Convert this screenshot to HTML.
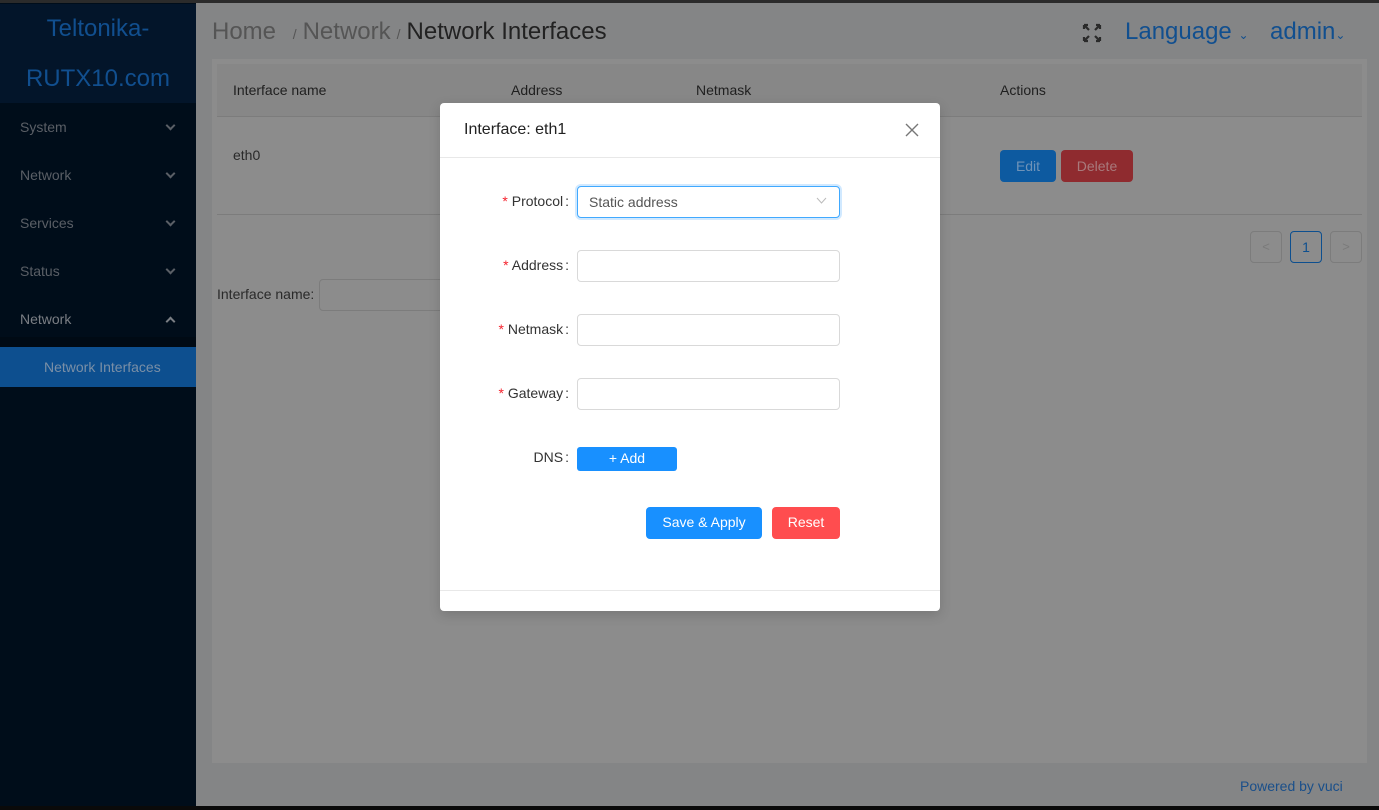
<!DOCTYPE html>
<html><head><meta charset="utf-8"><style>
*{box-sizing:border-box;margin:0;padding:0}
body{width:1379px;height:810px;overflow:hidden;background:#848586;font-family:"Liberation Sans",sans-serif;position:relative}
.a{position:absolute}
.side{left:0;top:3px;width:196px;height:803px;background:#000d1a}
.logo{left:0;top:4px;width:196px;height:99px;background:#03152a;color:#114f8f;font-size:24px;text-align:center;line-height:50px}
.mi{left:20px;color:#5a5f66;font-size:14px}
.chev{left:167px;width:7px;height:7px;border-right:2px solid #5a5f66;border-bottom:2px solid #5a5f66;transform:rotate(45deg)}
.lbl{font-size:14px;color:#222;}
.box{border:1px solid #d9d9d9;border-radius:4px;background:#fff;width:263px;height:32px}
.star{color:#f5222d}
.fl{font-size:14px;color:#333;text-align:right;width:130px}
.c{margin-left:2px}
</style></head><body>
<div class="a" style="left:0;top:0;width:1379px;height:3px;background:#2b2b2b"></div>
<div class="a" style="left:0;top:806px;width:1379px;height:4px;background:#0a0a0a"></div>
<div class="a side"></div>
<div class="a logo">Teltonika-<br>RUTX10.com</div>
<div class="a mi" style="top:119px">System</div><div class="a chev" style="top:122px"></div>
<div class="a mi" style="top:167px">Network</div><div class="a chev" style="top:170px"></div>
<div class="a mi" style="top:215px">Services</div><div class="a chev" style="top:218px"></div>
<div class="a mi" style="top:263px">Status</div><div class="a chev" style="top:266px"></div>
<div class="a mi" style="top:311px;color:#7a7e84">Network</div><div class="a chev" style="top:318px;transform:rotate(225deg);border-color:#7a7e84"></div>
<div class="a" style="left:0;top:337px;width:196px;height:50px;background:#000a14"></div>
<div class="a" style="left:0;top:347px;width:196px;height:40px;background:#0d4f8f;color:#7a8fa6;font-size:14px;line-height:40px;padding-left:44px">Network Interfaces</div>

<div class="a" style="left:212px;top:18px;font-size:24px;color:#555"><span>Home</span> <span style="font-size:14px;margin:0 6px 0 10px">/</span><span>Network</span><span style="font-size:14px;margin:0 6px">/</span><span style="color:#222">Network Interfaces</span></div>
<svg class="a" style="left:1081px;top:22px" width="22" height="22" viewBox="0 0 22 22" stroke="#2a2a2a" stroke-width="2.2" fill="none"><path d="M3 3l5 5M3 3h4M3 3v4M19 3l-5 5M19 3h-4M19 3v4M3 19l5-5M3 19h4M3 19v-4M19 19l-5-5M19 19h-4M19 19v-4"/></svg>
<div class="a" style="left:1125px;top:18px;font-size:24px;color:#114f8f">Language <span style="font-size:12px">⌄</span></div>
<div class="a" style="left:1270px;top:18px;font-size:24px;color:#114f8f">admin<span style="font-size:12px">⌄</span></div>

<div class="a" style="left:212px;top:59px;width:1155px;height:704px;background:#8c8c8c"></div>
<div class="a" style="left:217px;top:64px;width:1145px;height:53px;background:#878787;border-bottom:1px solid #7c7c7c"></div>
<div class="a lbl" style="left:233px;top:82px;color:#1f1f1f">Interface name</div>
<div class="a lbl" style="left:511px;top:82px;color:#1f1f1f">Address</div>
<div class="a lbl" style="left:696px;top:82px;color:#1f1f1f">Netmask</div>
<div class="a lbl" style="left:1000px;top:82px;color:#1f1f1f">Actions</div>
<div class="a lbl" style="left:233px;top:147px;color:#2a2a2a">eth0</div>
<div class="a" style="left:217px;top:214px;width:1145px;height:1px;background:#7c7c7c"></div>
<div class="a" style="left:1000px;top:150px;width:56px;height:32px;background:#0d5aa0;border-radius:4px;color:#6f93b8;font-size:14px;text-align:center;line-height:32px">Edit</div>
<div class="a" style="left:1061px;top:150px;width:72px;height:32px;background:#8f2b2f;border-radius:4px;color:#a87a7c;font-size:14px;text-align:center;line-height:32px">Delete</div>
<div class="a" style="left:1250px;top:231px;width:32px;height:32px;border:1px solid #7c7c7c;border-radius:4px;color:#7a7a7a;text-align:center;line-height:30px;font-size:13px">&lt;</div>
<div class="a" style="left:1290px;top:231px;width:32px;height:32px;border:1px solid #0d4f8f;border-radius:4px;color:#0d4f8f;text-align:center;line-height:30px;font-size:14px">1</div>
<div class="a" style="left:1330px;top:231px;width:32px;height:32px;border:1px solid #7c7c7c;border-radius:4px;color:#7a7a7a;text-align:center;line-height:30px;font-size:13px">&gt;</div>
<div class="a lbl" style="left:217px;top:286px;color:#2a2a2a">Interface name:</div>
<div class="a" style="left:319px;top:279px;width:130px;height:32px;border:1px solid #7c7c7c;border-radius:4px"></div>
<div class="a" style="left:1240px;top:778px;font-size:14px;color:#1a4f8a">Powered by vuci</div>

<div class="a" style="left:440px;top:103px;width:500px;height:508px;background:#fff;border-radius:4px;box-shadow:0 4px 12px rgba(0,0,0,.15)"></div>
<div class="a" style="left:464px;top:121px;font-size:16px;color:#222">Interface: eth1</div>
<svg class="a" style="left:905px;top:123px" width="14" height="14" viewBox="0 0 14 14" stroke="#777" stroke-width="1.4"><path d="M1 1L13 13M13 1L1 13"/></svg>
<div class="a" style="left:440px;top:157px;width:500px;height:1px;background:#e8e8e8"></div>
<div class="a fl" style="left:439px;top:193px"><span class="star">*</span> Protocol<span class="c">:</span></div>
<div class="a box" style="left:577px;top:186px;border-color:#40a9ff;box-shadow:0 0 0 2px rgba(24,144,255,.2);color:#555;font-size:14px;line-height:30px;padding-left:11px">Static address<svg style="position:absolute;right:12px;top:10px" width="11" height="8" viewBox="0 0 11 8" fill="none" stroke="#bbb"><path d="M1 1l4.5 5L10 1"/></svg></div>
<div class="a fl" style="left:439px;top:257px"><span class="star">*</span> Address<span class="c">:</span></div>
<div class="a box" style="left:577px;top:250px"></div>
<div class="a fl" style="left:439px;top:321px"><span class="star">*</span> Netmask<span class="c">:</span></div>
<div class="a box" style="left:577px;top:314px"></div>
<div class="a fl" style="left:439px;top:385px"><span class="star">*</span> Gateway<span class="c">:</span></div>
<div class="a box" style="left:577px;top:378px"></div>
<div class="a fl" style="left:439px;top:449px">DNS<span class="c">:</span></div>
<div class="a" style="left:577px;top:447px;width:100px;height:24px;background:#1890ff;border-radius:3px;color:#fff;font-size:14px;text-align:center;line-height:23px">+ Add</div>
<div class="a" style="left:646px;top:507px;width:116px;height:32px;background:#1890ff;border-radius:4px;color:#fff;font-size:14px;text-align:center;line-height:31px">Save &amp; Apply</div>
<div class="a" style="left:772px;top:507px;width:68px;height:32px;background:#ff4d4f;border-radius:4px;color:#fff;font-size:14px;text-align:center;line-height:31px">Reset</div>
<div class="a" style="left:440px;top:590px;width:500px;height:1px;background:#e8e8e8"></div>
</body></html>
